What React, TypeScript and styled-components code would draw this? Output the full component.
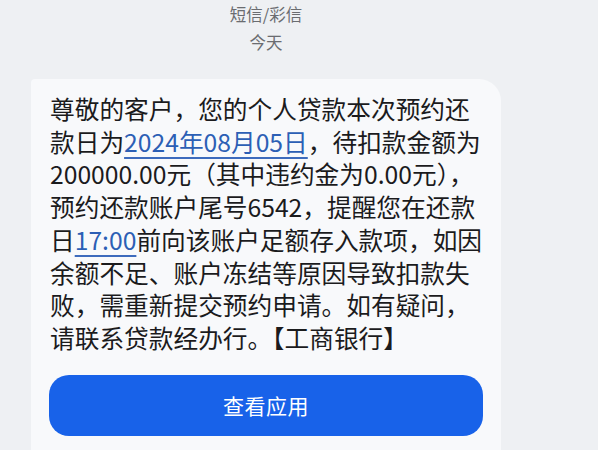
import React from "react";
import styled, { createGlobalStyle } from "styled-components";

const Global = createGlobalStyle`
  html, body { margin: 0; padding: 0; background: #eef0f3; }
  body { font-family: "Noto Sans CJK SC", "Noto Sans", sans-serif; overflow: hidden; }
`;

const Page = styled.div`
  width: 598px;
  height: 450px;
  box-sizing: border-box;
  padding-left: 31px;
  overflow: hidden;
`;

const Column = styled.div`
  width: 470px;
  display: flex;
  flex-direction: column;
`;

const Header = styled.div`
  display: flex;
  flex-direction: column;
  align-items: center;
  color: #6a6c70;
  font-size: 16.5px;
  line-height: 28px;
  margin-bottom: 23px;
`;

const Bubble = styled.div`
  background: #f8f9fb;
  border-radius: 4px 22px 22px 22px;
  padding: 13px 18px 40px 18px;
  display: flex;
  flex-direction: column;
`;

const Message = styled.div`
  padding-left: 1px;
  color: #1b1b1d;
  font-size: 24.7px;
  line-height: 32.7px;
  white-space: nowrap;
`;

const Line = styled.div``;

const Link = styled.span`
  color: #2c5fb5;
  text-decoration: underline;
  text-decoration-thickness: 1.5px;
  text-underline-offset: 5px;
  text-decoration-color: #3d6bbd;
`;

const Button = styled.div`
  margin-top: 21px;
  height: 61px;
  border-radius: 20px;
  background: #1862e9;
  color: #ffffff;
  font-size: 21px;
  display: flex;
  align-items: center;
  justify-content: center;
  letter-spacing: 0.5px;
`;

export default function App() {
  return (
    <>
      <Global />
      <Page>
        <Column>
          <Header>
            <div>短信/彩信</div>
            <div>今天</div>
          </Header>
          <Bubble>
            <Message>
              <Line>尊敬的客户，您的个人贷款本次预约还</Line>
              <Line>
                款日为<Link>2024年08月05日</Link>，待扣款金额为
              </Line>
              <Line>200000.00元（其中违约金为0.00元），</Line>
              <Line>预约还款账户尾号6542，提醒您在还款</Line>
              <Line>
                日<Link>17:00</Link>前向该账户足额存入款项，如因
              </Line>
              <Line>余额不足、账户冻结等原因导致扣款失</Line>
              <Line>败，需重新提交预约申请。如有疑问，</Line>
              <Line>请联系贷款经办行。【工商银行】</Line>
            </Message>
            <Button>查看应用</Button>
          </Bubble>
        </Column>
      </Page>
    </>
  );
}
